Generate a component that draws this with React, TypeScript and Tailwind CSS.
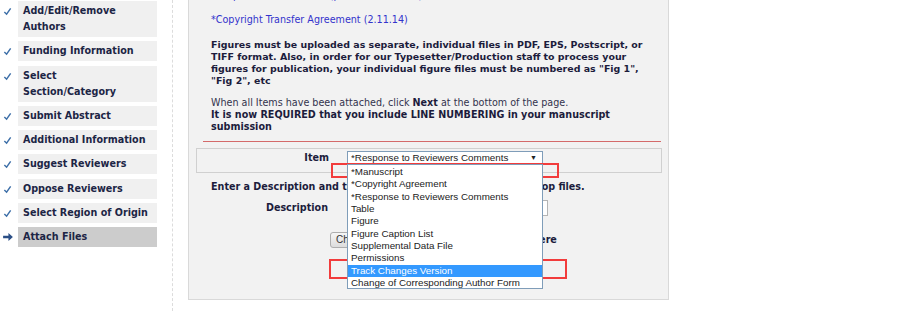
import React from "react";

const items: { label: string[]; active?: boolean }[] = [
  { label: ["Add/Edit/Remove", "Authors"] },
  { label: ["Funding Information"] },
  { label: ["Select", "Section/Category"] },
  { label: ["Submit Abstract"] },
  { label: ["Additional Information"] },
  { label: ["Suggest Reviewers"] },
  { label: ["Oppose Reviewers"] },
  { label: ["Select Region of Origin"] },
  { label: ["Attach Files"], active: true },
];

const options = [
  "*Manuscript",
  "*Copyright Agreement",
  "*Response to Reviewers Comments",
  "Table",
  "Figure",
  "Figure Caption List",
  "Supplemental Data File",
  "Permissions",
  "Track Changes Version",
  "Change of Corresponding Author Form",
];

function Check() {
  return (
    <svg width="9" height="9" viewBox="0 0 10 10">
      <path d="M1.5 5.5 L4 8 L8.5 1.5" fill="none" stroke="#3d6fa8" strokeWidth="1.6" />
    </svg>
  );
}

function Arrow() {
  return (
    <svg width="10" height="8" viewBox="0 0 11 9">
      <path d="M0 3 H6 V0 L11 4.5 L6 9 V6 H0 Z" fill="#2b4f86" />
    </svg>
  );
}

export default function App() {
  return (
    <div className="relative w-[900px] h-[311px] bg-white overflow-hidden flex font-['DejaVu_Sans',Verdana,sans-serif] text-[9.6px]">
      <aside className="w-[172px] shrink-0 pt-[1px] flex flex-col gap-[4.25px]">
        {items.map((it, i) => (
          <div key={i} className="flex">
            <div className="w-[18px] shrink-0 flex justify-start pl-[3px] pt-[6px]">
              {it.active ? <Arrow /> : <Check />}
            </div>
            <div
              className={`w-[139px] py-[2px] pl-[5px] font-bold leading-[16px] text-[#1c2545] ${
                it.active ? "bg-[#cccccc]" : "bg-[#f0f0f0]"
              }`}
            >
              {it.label.map((l, j) => (
                <div key={j}>{l}</div>
              ))}
            </div>
          </div>
        ))}
      </aside>
      <div className="w-0 h-full border-l border-dashed border-[#dcdcdc]" />
      <main className="pl-[15px]">
        <div className="w-[481px] h-[320px] mt-[-20px] bg-[#f2f2f2] border-l border-r border-b border-[#d9d9d9] pt-[10px] leading-[12px]">
          <div className="pl-[22px] h-[12px] text-[#3333cc] whitespace-nowrap">*Response to Reviewers (pdf, doc, docx, rtf)</div>
          <div className="pl-[22px] mt-[12px] text-[#3333cc]">*Copyright Transfer Agreement (2.11.14)</div>
          <div className="pl-[22px] mt-[13px] font-bold text-[#1c1c3c] whitespace-nowrap text-[9.45px]">
            <div>Figures must be uploaded as separate, individual files in PDF, EPS, Postscript, or</div>
            <div>TIFF format. Also, in order for our Typesetter/Production staff to process your</div>
            <div>figures for publication, your individual figure files must be numbered as "Fig 1",</div>
            <div>"Fig 2", etc</div>
          </div>
          <div className="pl-[22px] mt-[10px] text-[#33334d] whitespace-nowrap">
            <div>
              When all Items have been attached, click <span className="font-bold text-[#1c1c3c]">Next</span> at the bottom of the page.
            </div>
            <div className="font-bold text-[#1c1c3c]">It is now REQUIRED that you include LINE NUMBERING in your manuscript</div>
            <div className="font-bold text-[#1c1c3c]">submission</div>
          </div>
          <div className="ml-[14px] mt-[8px] w-[458px] h-px bg-[#d46a6a]" />
          <div className="ml-[7px] mt-[6px] w-[466px] h-[25px] border border-[#d0d0d0] flex pt-[2px]">
            <div className="w-[150px] text-right pr-[18px] pt-[1px] font-bold text-[#1c1c3c]">Item</div>
            <div className="relative">
              <div className="w-[196px] h-[14px] bg-white border border-[#7f9db9] flex items-center justify-between pl-[3px] pr-[5px] font-['Liberation_Sans',Arial,sans-serif] text-[9.8px] text-[#222] leading-[12px] whitespace-nowrap">
                <span>*Response to Reviewers Comments</span>
                <span className="text-[7px]">▼</span>
              </div>
              <div className="absolute left-0 top-[13px] w-[196px] h-[125px] overflow-hidden bg-white border border-[#7f9db9] z-10 font-['Liberation_Sans',Arial,sans-serif] text-[9.8px] text-[#222] pt-[1px]">
                {options.map((o) => (
                  <div
                    key={o}
                    className={`h-[12.35px] leading-[12.35px] pl-[3px] whitespace-nowrap ${
                      o === "Track Changes Version" ? "bg-[#3399ff] text-white" : ""
                    }`}
                  >
                    {o}
                  </div>
                ))}
              </div>
            </div>
          </div>
          <div className="pl-[22px] mt-[8px] font-bold text-[#1c1c3c] whitespace-nowrap">
            Enter a Description and then click Choose File or drag and drop files.
          </div>
          <div className="flex mt-[7px] h-[16px] items-center">
            <div className="w-[159px] text-right pr-[20px] font-bold text-[#1c1c3c]">Description</div>
            <div className="w-[200px] h-[16px] bg-white border border-[#b5b5b5]" />
          </div>
          <div className="flex mt-[16px] items-center">
            <div className="ml-[141px] h-[16px] px-[5px] rounded-[3px] border border-[#adadad] bg-gradient-to-b from-[#f6f6f6] to-[#dcdcdc] text-[#333] font-['Liberation_Sans',Arial,sans-serif] text-[10px] leading-[14px] whitespace-nowrap">
              Choose Files
            </div>
            <div className="ml-[5px] font-bold text-[#1c1c3c] whitespace-nowrap">or Drag and Drop Files Here</div>
          </div>
        </div>
      </main>
      <div className="absolute left-[331px] top-[163px] w-[228px] h-[15px] border-2 border-[#f23c3c]" />
      <div className="absolute left-[329px] top-[259px] w-[238px] h-[20px] border-2 border-[#f23c3c]" />
    </div>
  );
}
